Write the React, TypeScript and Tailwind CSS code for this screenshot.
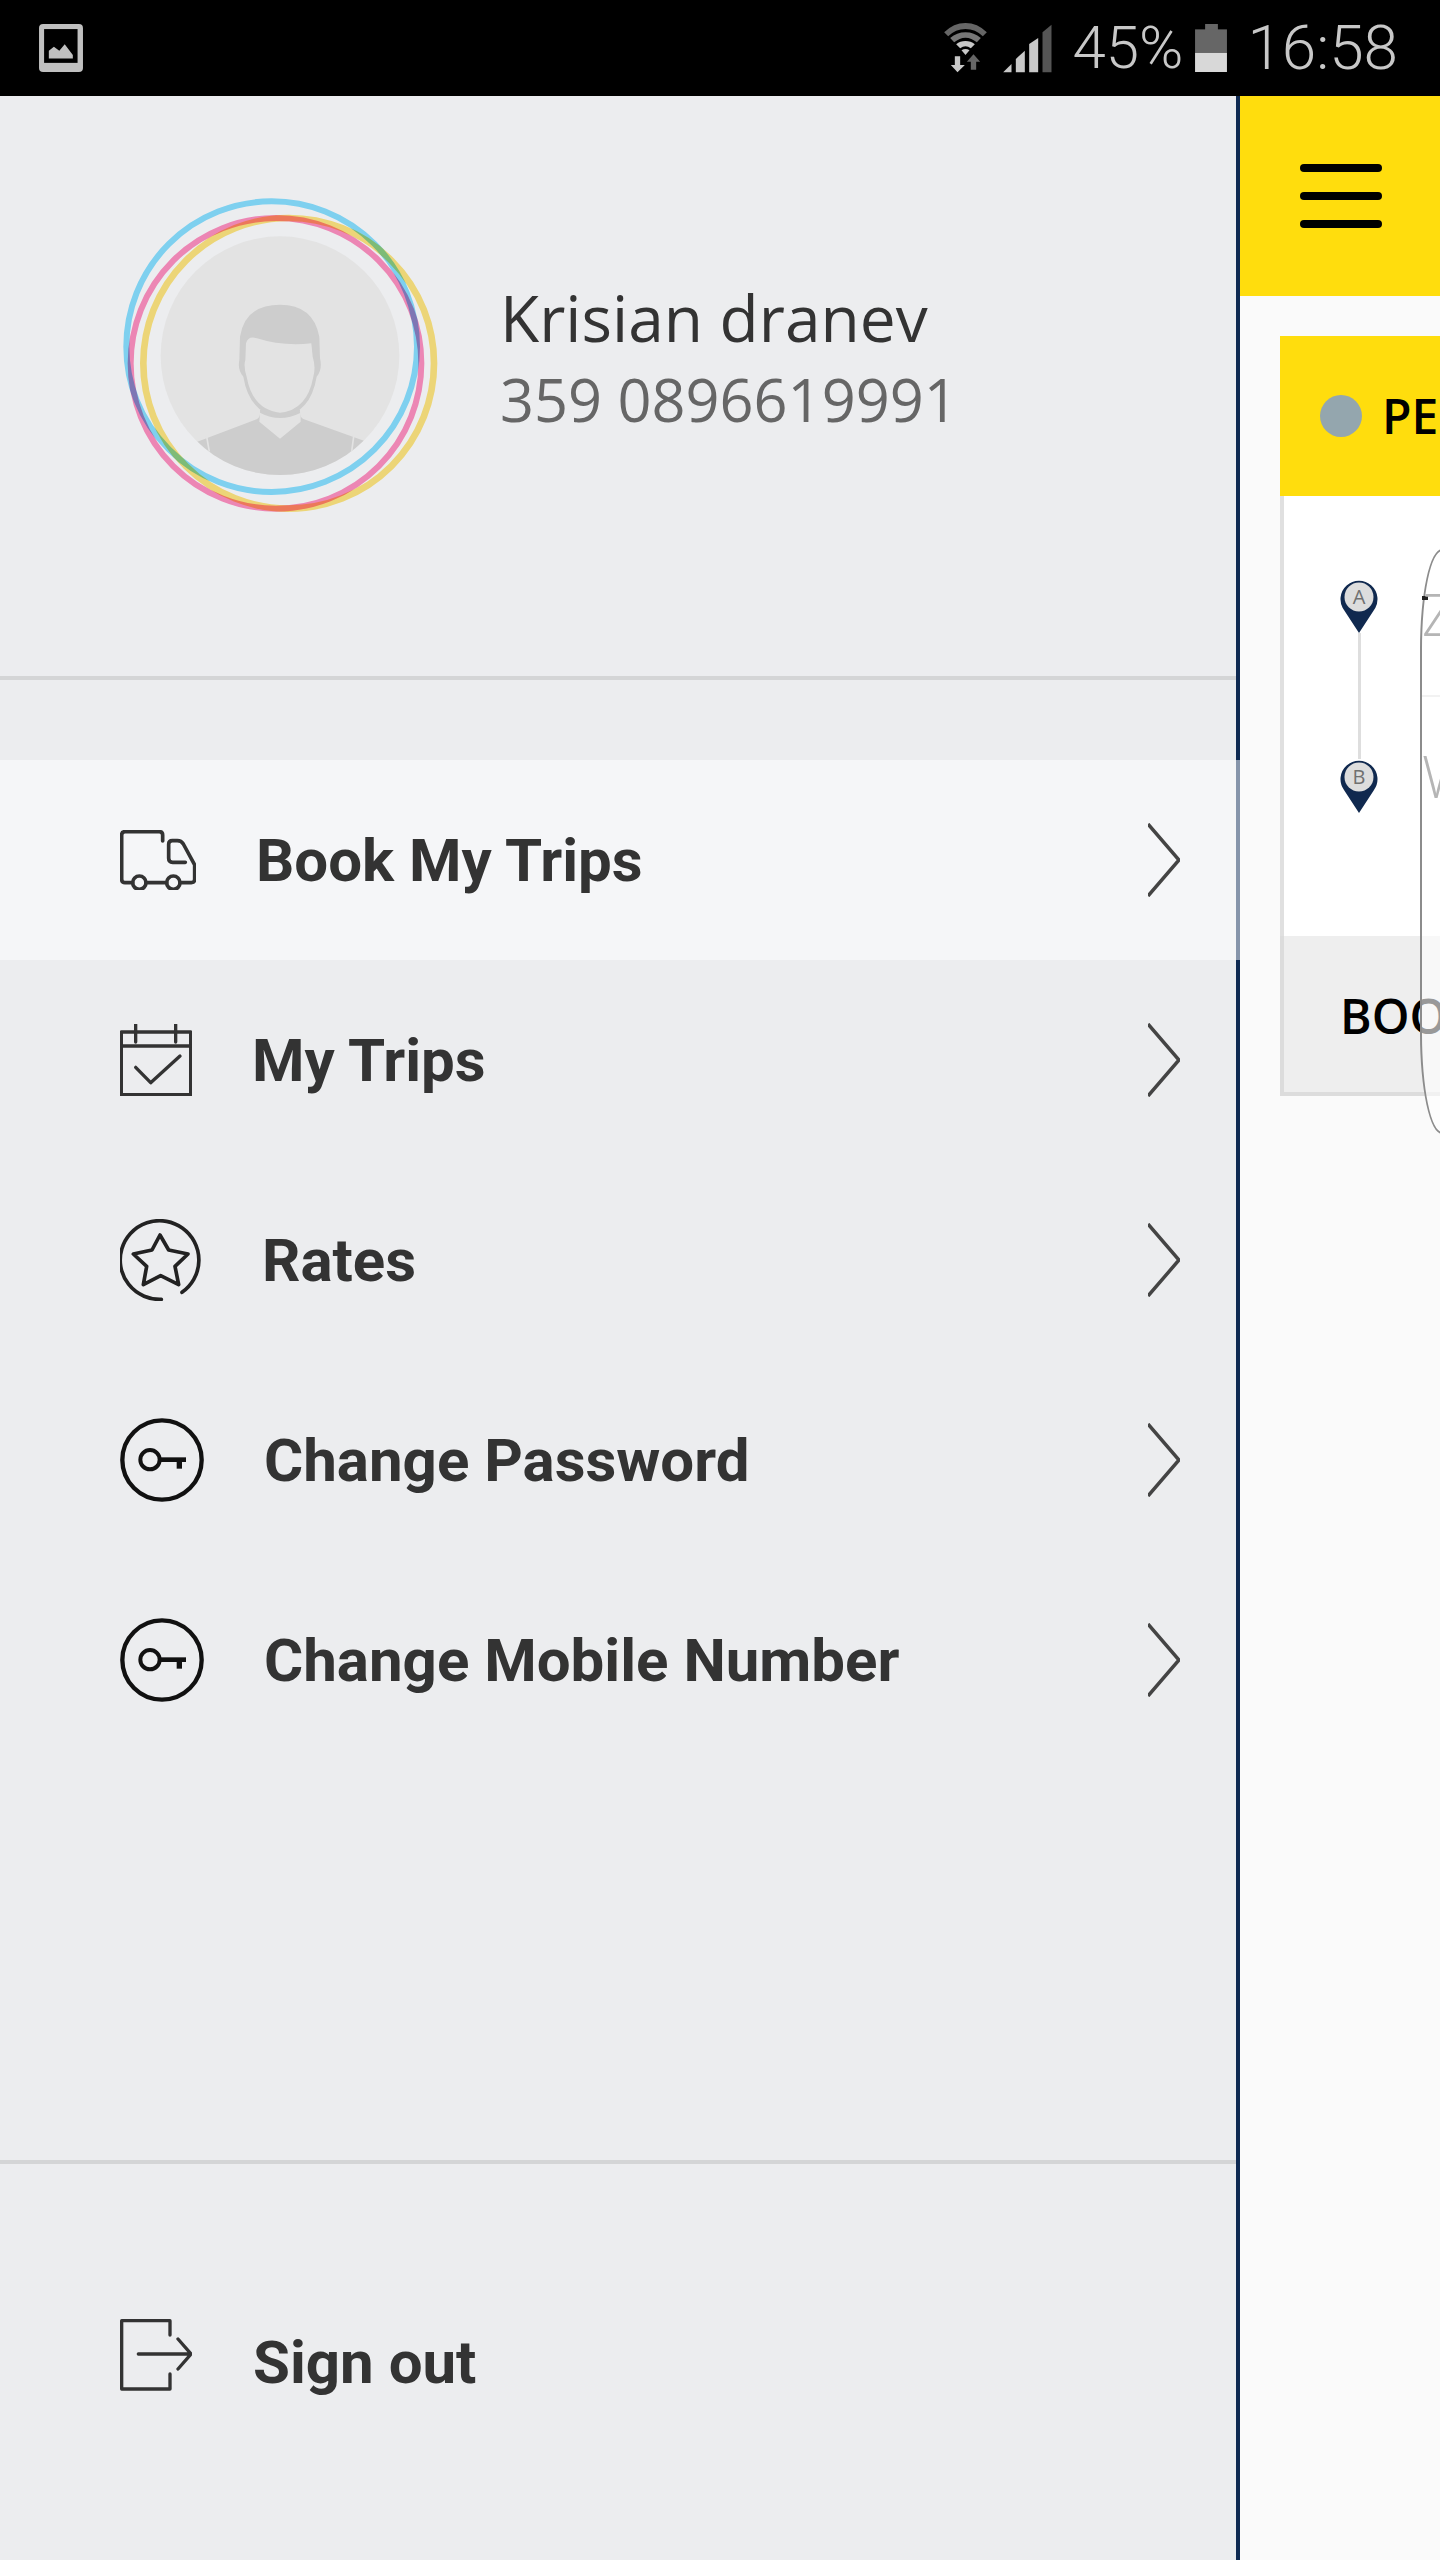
const ink = "#333333";

function Chevron() {
  return (
    <svg width="32" height="74" viewBox="0 0 32 74" fill="none" className="shrink-0">
      <path d="M0 1 L31 37 L0 73" stroke="#444444" strokeWidth="3.5" />
    </svg>
  );
}

function TruckIcon() {
  return (
    <svg width="76" height="60" viewBox="0 0 228 180" fill="none" stroke={ink} strokeWidth="11" strokeLinecap="round" strokeLinejoin="round">
      <path d="M128 33 V15 Q128 5 118 5 H15 Q5 5 5 15 V148 Q5 158 15 158 H38" />
      <circle cx="58" cy="158" r="20" />
      <path d="M78 158 H140" />
      <circle cx="160" cy="158" r="20" />
      <path d="M180 158 H214 Q224 158 224 148 V105 L190 42 Q184 32 172 32 H157 Q146 32 146 43 V85 Q146 97 158 97 H196" />
    </svg>
  );
}

function CalendarIcon() {
  return (
    <svg width="72" height="72" viewBox="0 0 216 216" fill="none" stroke={ink} strokeWidth="10" strokeLinecap="round" strokeLinejoin="round">
      <rect x="4" y="24" width="208" height="188" />
      <path d="M4 66 H212 M47 2 V54 M167 2 V54" />
      <path d="M47 130 L92 176 L180 96" />
    </svg>
  );
}

function StarIcon() {
  return (
    <svg width="82" height="82" viewBox="0 0 246 246" fill="none" stroke="#222222" strokeWidth="11" strokeLinejoin="round" strokeLinecap="round">
      <path d="M186 220 A118 118 0 1 0 124 241" />
      <path d="M120 48 L146 93 L204 105 L165 142 L176 197 L122 170 L70 197 L80 142 L40 105 L96 93 Z" />
    </svg>
  );
}

function KeyIcon() {
  return (
    <svg width="84" height="84" viewBox="0 0 252 252" fill="none" stroke="#111111">
      <circle cx="126" cy="126" r="119" strokeWidth="13" />
      <circle cx="90" cy="125" r="29" strokeWidth="12" />
      <path d="M120 125 H198" strokeWidth="14" />
      <path d="M178 125 V152" strokeWidth="16" />
    </svg>
  );
}

function SignOutIcon() {
  return (
    <svg width="72" height="72" viewBox="0 0 216 216" fill="none" stroke={ink} strokeWidth="10" strokeLinecap="round">
      <path d="M150 48 V5 H5 V210 H150 V165" strokeLinejoin="round" />
      <path d="M55 105 H212 M174 60 L213 105 L174 150" strokeLinejoin="round" />
    </svg>
  );
}

function Avatar() {
  return (
    <svg width="360" height="350" viewBox="0 0 1080 1050" fill="none" className="shrink-0">
      <defs>
        <clipPath id="disc">
          <circle cx="540" cy="527" r="358" />
        </clipPath>
      </defs>
      <circle cx="540" cy="527" r="358" fill="#e3e3e3" />
      <g clipPath="url(#disc)">
        <path d="M280 790 L470 718 Q482 712 480 690 H600 Q598 712 612 718 L800 785 V900 H280 Z" fill="#cdcdcd" />
        <path d="M480 698 Q540 730 602 698 V725 L540 776 L478 725 Z" fill="#e3e3e3" />
        <path d="M320 770 L328 815 M762 762 L755 815" stroke="#e3e3e3" strokeWidth="5" />
        <path d="M418 540 Q412 570 430 590 Q448 700 540 712 Q632 700 650 590 Q668 570 660 535 L658 470 Q640 374 540 374 Q436 374 420 470 Z" fill="#cdcdcd" />
        <path d="M436 540 L438 490 Q444 468 468 474 Q550 500 634 490 L638 530 Q648 560 640 590 Q622 690 540 698 Q458 690 440 590 Q430 560 436 540 Z" fill="#e3e3e3" />
      </g>
      <circle cx="566" cy="550" r="436" stroke="#ffe67f" strokeWidth="20" className="mix-blend-multiply" />
      <circle cx="528" cy="550" r="436" stroke="#ff90c0" strokeWidth="18" className="mix-blend-multiply" />
      <circle cx="515" cy="500" r="436" stroke="#88e0ff" strokeWidth="18" className="mix-blend-multiply" />
    </svg>
  );
}

function StatusIcons() {
  return (
    <div className="flex items-center">
      <svg width="43" height="50" viewBox="42 40 128 150">
        <path d="M42 68 Q70 40 106 40 Q142 40 170 68 L158 80 Q136 58 106 58 Q76 58 54 80 Z" fill="#666666" />
        <path d="M60 85 Q80 68 106 68 Q132 68 152 85 L140 98 Q124 84 106 84 Q88 84 72 98 Z" fill="#777777" />
        <path d="M78 104 Q90 94 106 94 Q122 94 134 104 L122 116 Q114 110 106 110 Q98 110 90 116 Z" fill="#c8c8c8" />
        <path d="M94 122 Q106 114 118 122 L106 136 Z" fill="#c8c8c8" />
        <path d="M74 140 H90 V166 H104 L82 188 L62 166 H74 Z" fill="#c8c8c8" />
        <path d="M130 134 L150 156 H138 V180 H122 V156 H110 Z" fill="#666666" />
      </svg>
      <svg width="49" height="49" viewBox="220 40 146 147" className="ml-[16px]">
        <path d="M220 185 L245 160 V185 Z" fill="#c8c8c8" />
        <path d="M258 145 L285 120 V185 H258 Z" fill="#c8c8c8" />
        <path d="M298 100 L325 82 V185 H298 Z" fill="#c8c8c8" />
        <path d="M338 65 L365 42 V185 H338 Z" fill="#555555" />
      </svg>
    </div>
  );
}

function MenuRow({
  icon,
  label,
  gap,
  active,
}: {
  icon: React.ReactNode;
  label: string;
  gap: string;
  active?: boolean;
}) {
  return (
    <div
      className={
        "flex h-[200px] items-center pl-[120px] pr-[56px] " +
        (active ? "-mr-[4px] border-r-[4px] border-[#8695ab] bg-[#f5f6f8]" : "")
      }
    >
      <div className="flex items-center">{icon}</div>
      <span className={"mt-[2px] text-[60px] font-bold text-[#333333] " + gap}>{label}</span>
      <div className="ml-auto">
        <Chevron />
      </div>
    </div>
  );
}

export default function App() {
  return (
    <div className="flex h-[2560px] w-[1440px] flex-col overflow-hidden bg-black font-['Roboto',sans-serif]">
      <div className="flex h-[96px] shrink-0 items-center justify-between pl-[39px] pr-[42px]">
        <svg width="44" height="48" viewBox="58 43 130 142">
          <rect x="58" y="43" width="130" height="142" rx="12" fill="#c0c0c0" />
          <rect x="73" y="58" width="99" height="100" fill="#000000" />
          <path d="M87 145 V122 L102 110 L118 122 L134 103 L158 135 V145 Z" fill="#c0c0c0" />
        </svg>
        <div className="flex items-center text-[62px] font-light leading-none text-[#c8c8c8]">
          <StatusIcons />
          <span className="ml-[20px] text-[60px]">45%</span>
          <svg width="32" height="48" viewBox="798 42 95 143" className="ml-[12px]">
            <rect x="828" y="42" width="38" height="18" fill="#666666" />
            <rect x="798" y="58" width="95" height="70" fill="#666666" />
            <rect x="798" y="128" width="95" height="57" fill="#d8d8d8" />
          </svg>
          <span className="ml-[20px]">16:58</span>
        </div>
      </div>

      <div className="flex min-h-0 flex-1">
        <div className="flex w-[1240px] shrink-0 flex-col border-r-[4px] border-[#0f2a52] bg-[#ecedef]">
          <div className="flex h-[584px] shrink-0 items-start border-b-[4px] border-[#d4d5d6] pt-[84px] pl-[100px]">
            <Avatar />
            <div className="ml-[40px] flex flex-col pt-[97px] font-['Open_Sans',sans-serif]">
              <span className="text-[64px] leading-[82px] text-[#333333]">Krisian dranev</span>
              <span className="text-[59.5px] leading-[80px] text-[#666666]">359 0896619991</span>
            </div>
          </div>

          <div className="mt-[80px] flex flex-col">
            <MenuRow active icon={<TruckIcon />} label="Book My Trips" gap="ml-[60px]" />
            <MenuRow icon={<CalendarIcon />} label="My Trips" gap="ml-[60px]" />
            <MenuRow icon={<StarIcon />} label="Rates" gap="ml-[60px]" />
            <MenuRow icon={<KeyIcon />} label="Change Password" gap="ml-[60px]" />
            <MenuRow icon={<KeyIcon />} label="Change Mobile Number" gap="ml-[60px]" />
          </div>

          <div className="mt-[400px] flex h-[392px] items-center border-t-[4px] border-[#d4d5d6] pl-[120px] pt-[6px]">
            <div className="mb-[12px]">
              <SignOutIcon />
            </div>
            <span className="ml-[61px] mt-[4px] text-[60px] font-bold text-[#333333]">Sign out</span>
          </div>
        </div>

        <div className="relative min-w-0 flex-1 overflow-hidden bg-[#fafafa] font-['Open_Sans',sans-serif]">
          <div className="flex h-[200px] items-center bg-[#ffdd0d] pl-[60px]">
            <div className="flex w-[82px] flex-col gap-[20px]">
              <div className="h-[8px] rounded-full bg-black" />
              <div className="h-[8px] rounded-full bg-black" />
              <div className="h-[8px] rounded-full bg-black" />
            </div>
          </div>

          <div className="ml-[40px] mt-[40px] w-[600px]">
            <div className="flex h-[160px] items-center bg-[#ffdd0d] pl-[40px]">
              <div className="h-[42px] w-[42px] rounded-full bg-[#94a6ae]" />
              <span className="ml-[20px] whitespace-nowrap text-[48px] font-semibold text-black">PERSONAL</span>
            </div>
            <div className="flex h-[440px] border-l-[4px] border-[#e0e0e0] bg-white pl-[56px] pt-[83px]">
              <div className="flex w-[38px] flex-col items-center">
                <Pin letter="A" />
                <div className="h-[126px] w-[3px] bg-[#dedede]" />
                <Pin letter="B" />
              </div>
            </div>
            <div className="flex h-[160px] items-center border-b-[4px] border-l-[4px] border-[#dcdcdc] bg-[#eeeeee] pb-0 pl-[56px] pt-[3px]">
              <span className="whitespace-nowrap text-[48px] font-semibold text-black">BOOK</span>
            </div>
          </div>

          <div className="absolute left-[180px] top-[453px] h-[585px] w-[300px] rounded-[22px/100px] border-2 border-[#8c8c8c] bg-white/60">
            <div className="absolute left-0 top-[45px] h-[4px] w-[6px] bg-[#222222]" />
            <span className="absolute left-0 top-[34px] text-[58px] font-light leading-none text-[#b5b5b5]">Z</span>
            <div className="absolute left-0 top-[144px] w-full border-t-2 border-[#f2f2f2]" />
            <span className="absolute left-0 top-[196px] text-[58px] font-light leading-none text-[#b5b5b5]">W</span>
          </div>
        </div>
      </div>
    </div>
  );
}

function Pin({ letter }: { letter: string }) {
  return (
    <div className="relative h-[54px] w-[38px] shrink-0">
      <svg width="38" height="54" viewBox="0 0 38 54" className="absolute inset-0">
        <path d="M19 54 L4 31 A18.5 18.5 0 1 1 34 31 Z" fill="#10294f" />
        <circle cx="19" cy="18" r="14.5" fill="#dddddd" />
      </svg>
      <span className="absolute left-0 top-[8px] w-full text-center font-['Open_Sans',sans-serif] text-[20px] leading-[20px] text-[#707070]">
        {letter}
      </span>
    </div>
  );
}
